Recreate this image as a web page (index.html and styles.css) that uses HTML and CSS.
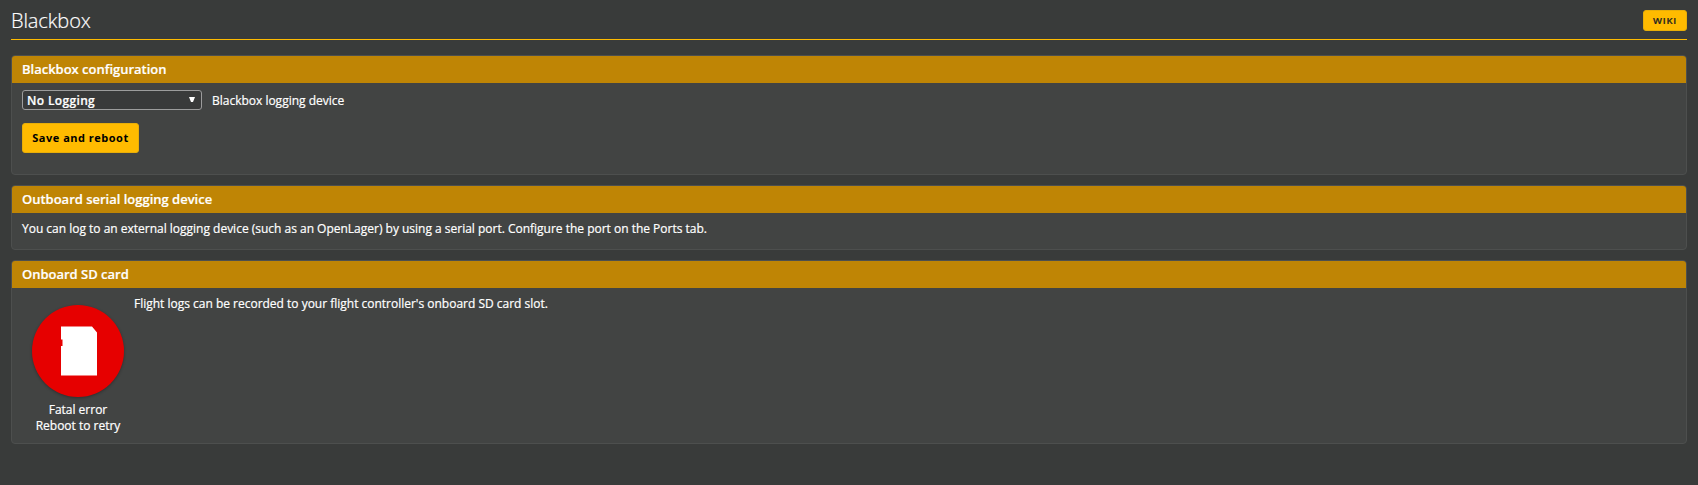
FILE: index.html
```
<!DOCTYPE html>
<html lang="en">
<head>
<meta charset="utf-8">
<title>Blackbox</title>
<link rel="stylesheet" href="styles.css">
</head>
<body>
<main class="tab">
  <header class="tab-head">
    <h1 class="tab-title">Blackbox</h1>
    <a class="wiki">WIKI</a>
  </header>
  <section class="box box-config">
    <h2 class="box-title">Blackbox configuration</h2>
    <div class="box-body">
      <div class="row">
        <div class="select"><span class="value">No Logging</span><svg class="arrow" width="6" height="5" viewBox="0 0 6 5"><path d="M0 0h6L4 5H2z"/></svg></div>
        <span class="label">Blackbox logging device</span>
      </div>
      <button class="save" type="button">Save and reboot</button>
    </div>
  </section>
  <section class="box box-serial">
    <h2 class="box-title">Outboard serial logging device</h2>
    <p class="box-body note">You can log to an external logging device (such as an OpenLager) by using a serial port. Configure the port on the Ports tab.</p>
  </section>
  <section class="box box-card">
    <h2 class="box-title">Onboard SD card</h2>
    <div class="box-body card">
      <div class="status">
        <div class="disc"><svg class="sd" width="36" height="50" viewBox="0 0 36 50"><path d="M0 0.4H31L36 6.5V49.5H0V20H1.5V13.5H0z"/></svg></div>
        <div>Fatal error<br>Reboot to retry</div>
      </div>
      <p class="note">Flight logs can be recorded to your flight controller's onboard SD card slot.</p>
    </div>
  </section>
</main>
</body>
</html>
```
FILE: styles.css
```
* { box-sizing: border-box; }
body {
  margin: 0;
  min-height: 485px;
  background: #393b3a;
  color: #fff;
  font: 12px/16px "Open Sans", sans-serif;
  letter-spacing: -0.008px;
  -webkit-text-stroke: 0.2px;
}
h1, h2, p { margin: 0; }
.tab { padding: 10px 11px 0; }
.tab-head {
  display: flex;
  justify-content: space-between;
  height: 30px;
  margin-bottom: 15px;
  border-bottom: 1px solid #ffbb00;
}
.tab-title { font-size: 20px; font-weight: 300; line-height: 21px; letter-spacing: -0.1px; }
.wiki {
  width: 44px;
  height: 21px;
  border: 1px solid #e8ae08;
  border-radius: 3px;
  background: #ffbb00;
  color: #222;
  font-size: 9.5px;
  font-weight: 600;
  line-height: 19px;
  letter-spacing: 0.8px;
  text-align: center;
}
.box {
  margin-bottom: 10px;
  border: 1px solid #4d4f4e;
  border-radius: 4px;
  background: #424443;
  overflow: hidden;
}
.box-config { height: 120px; }
.box-serial { height: 65px; }
.box-card { height: 184px; }
.box-title {
  height: 27px;
  padding-left: 10px;
  background: #bf8505;
  font-size: 13px;
  font-weight: 600;
  line-height: 27px;
  letter-spacing: -0.01px;
}
.box-body { padding: 7px 10px 0; }
.row { display: flex; align-items: center; gap: 10px; height: 20px; margin-bottom: 13px; }
.label { padding-top: 2px; }
.select {
  display: flex;
  align-items: center;
  justify-content: space-between;
  width: 180px;
  height: 20px;
  padding: 0 6px 0 4px;
  border: 1px solid #9c9c9c;
  border-radius: 3px;
  background: #393a3a;
  font-weight: 600;
  letter-spacing: 0.35px;
}
.value { padding-top: 2px; }
.arrow { fill: #fff; margin-bottom: 1px; }
.save {
  display: block;
  width: 117px;
  height: 30px;
  padding: 0;
  border: 1px solid #e8ae08;
  border-radius: 3px;
  background: #ffbb00;
  color: #000;
  font: 700 11px/28px "Open Sans", sans-serif;
  letter-spacing: 0.5px;
  -webkit-text-stroke: 0;
}
.note { padding-top: 8px; }
.card { display: flex; padding-top: 0; }
.status { width: 112px; padding-top: 17px; text-align: center; }
.disc {
  display: flex;
  align-items: center;
  justify-content: center;
  width: 92px;
  height: 92px;
  margin: 0 0 5px 10px;
  border-radius: 50%;
  background: #e60000;
  box-shadow: 0 1px 3px rgba(0, 0, 0, 0.3);
}
.sd { fill: #fff; margin-left: 2px; }
```
